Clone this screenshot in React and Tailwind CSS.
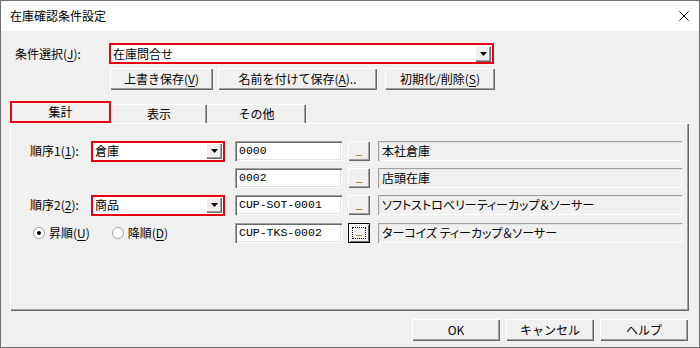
import React from "react";

const raised = "bg-[#f0f0f0] shadow-[inset_1px_1px_0_#ffffff,inset_-1px_-1px_0_#696969,inset_-2px_-2px_0_#a0a0a0]";
const sunkenWhite = "bg-white shadow-[inset_1px_1px_0_#a0a0a0,inset_2px_2px_0_#696969,inset_-1px_-1px_0_#ffffff,inset_-2px_-2px_0_#e3e3e3]";
const sunkenGray = "bg-[#f0f0f0] shadow-[inset_1px_1px_0_#a0a0a0,inset_2px_2px_0_#e3e3e3,inset_-1px_-1px_0_#ffffff]";

function U({ children }) {
  return <span className="underline underline-offset-2">{children}</span>;
}

function Btn({ className = "", children }) {
  return (
    <div className={`${raised} h-[22px] flex items-center justify-center ${className}`}>
      {children}
    </div>
  );
}

function Arrow() {
  return (
    <div className={`${raised} w-[16px] h-[16px] flex items-center justify-center mr-[1px]`}>
      <svg width="7" height="4" viewBox="0 0 7 4">
        <path d="M0 0H7L3.5 4Z" fill="#000" />
      </svg>
    </div>
  );
}

function Combo({ className = "", text }) {
  return (
    <div className={`h-[21px] border-2 border-[#e60012] bg-white flex items-center justify-between ${className}`}>
      <span className="pl-[2px] leading-none">{text}</span>
      <Arrow />
    </div>
  );
}

function Dots({ focus }) {
  if (focus) {
    return (
      <div className="w-[22px] h-[20px] bg-[#f0f0f0] border border-black shadow-[inset_1px_1px_0_#ffffff,inset_-1px_-1px_0_#696969] flex items-center justify-center">
        <div className="w-[14px] h-[12px] border border-dotted border-black flex items-end justify-center pb-[1px]">
          <span className="text-[8px] leading-none">...</span>
        </div>
      </div>
    );
  }
  return (
    <div className={`${raised} w-[22px] h-[20px] flex items-end justify-center pb-[4px]`}>
      <span className="text-[8px] leading-none">...</span>
    </div>
  );
}

function Radio({ checked }) {
  return (
    <svg width="12" height="12" viewBox="0 0 12 12">
      <circle cx="6" cy="6" r="5.5" fill="#fff" stroke="#a0a0a0" />
      {checked && <circle cx="6" cy="6" r="2" fill="#000" />}
    </svg>
  );
}

function DataRow({ left, code, name, focus }) {
  return (
    <div className="flex items-center h-[20px]">
      <div className="w-[205px] flex items-center h-full">{left}</div>
      <div className={`${sunkenWhite} w-[107px] h-[20px] flex items-center pl-[4px]`}>
        <span className="font-['Liberation_Mono',monospace] text-[11.5px] leading-none">{code}</span>
      </div>
      <div className="ml-[6px]">
        <Dots focus={focus} />
      </div>
      <div className={`${sunkenGray} ml-[8px] w-[304px] h-[20px] flex items-center pl-[4px]`}>
        <span className="[font-feature-settings:'palt'] leading-none">{name}</span>
      </div>
    </div>
  );
}

export default function App() {
  return (
    <div className="w-[700px] h-[348px] border border-[#707070] bg-[#f0f0f0] flex flex-col overflow-hidden font-['Noto_Sans_CJK_JP',sans-serif] text-[12px] text-black">
      {/* title bar */}
      <div className="h-[30px] bg-white flex items-center justify-between pl-[9px] pr-[10px] shrink-0">
        <span className="leading-none">在庫確認条件設定</span>
        <svg width="10" height="10" viewBox="0 0 10 10">
          <path d="M0.5 0.5L9.5 9.5M9.5 0.5L0.5 9.5" stroke="#000" strokeWidth="1" />
        </svg>
      </div>

      {/* condition select */}
      <div className="mt-[12px] flex items-center pl-[14px] h-[21px]">
        <span className="w-[94px] leading-none">
          条件選択(<U>J</U>):
        </span>
        <Combo className="w-[385px]" text="在庫問合せ" />
      </div>

      {/* buttons */}
      <div className="mt-[4px] flex pl-[109px]">
        <Btn className="w-[103px]">
          上書き保存(<U>V</U>)
        </Btn>
        <Btn className="ml-[5px] w-[159px]">
          名前を付けて保存(<U>A</U>)..
        </Btn>
        <Btn className="ml-[8px] w-[110px]">
          初期化/削除(<U>S</U>)
        </Btn>
      </div>

      {/* tabs */}
      <div className="mt-[11px] flex items-end pl-[9px] h-[22px]">
        <div className="w-[101px] h-[22px] border-2 border-[#e60012] flex items-center justify-center">
          <span className="leading-none">集計</span>
        </div>
        <div className="w-[96px] h-[19px] border-t border-white shadow-[inset_-1px_0_0_#696969,inset_-2px_0_0_#a0a0a0] flex items-center justify-center">
          <span className="leading-none">表示</span>
        </div>
        <div className="w-[99px] h-[19px] border-t border-white shadow-[inset_-1px_0_0_#696969,inset_-2px_0_0_#a0a0a0] flex items-center justify-center">
          <span className="leading-none">その他</span>
        </div>
      </div>

      {/* panel */}
      <div className="ml-[9px] w-[679px] h-[188px] shadow-[inset_1px_1px_0_#ffffff,inset_-1px_-1px_0_#696969,inset_-2px_-2px_0_#a0a0a0] pt-[18px] pl-[20px] flex flex-col gap-[7px]">
        <DataRow
          code="0000"
          name="本社倉庫"
          left={
            <>
              <span className="w-[61px] leading-none">
                順序1(<U>1</U>):
              </span>
              <Combo className="w-[134px]" text="倉庫" />
            </>
          }
        />
        <DataRow code="0002" name="店頭在庫" left={null} />
        <DataRow
          code="CUP-SOT-0001"
          name="ソフトストロベリーティーカップ＆ソーサー"
          left={
            <>
              <span className="w-[61px] leading-none">
                順序2(<U>2</U>):
              </span>
              <Combo className="w-[134px]" text="商品" />
            </>
          }
        />
        <div className="mt-[1px]">
          <DataRow
            code="CUP-TKS-0002"
            name="ターコイズ ティーカップ＆ソーサー"
            focus
            left={
              <div className="flex items-center pl-[3px]">
                <Radio checked />
                <span className="ml-[4px] leading-none">
                  昇順(<U>U</U>)
                </span>
                <div className="ml-[22px]">
                  <Radio />
                </div>
                <span className="ml-[4px] leading-none">
                  降順(<U>D</U>)
                </span>
              </div>
            }
          />
        </div>
      </div>

      {/* bottom buttons */}
      <div className="mt-[8px] flex justify-end pr-[11px] gap-[6px]">
        <Btn className="w-[88px]">OK</Btn>
        <Btn className="w-[88px]">キャンセル</Btn>
        <Btn className="w-[88px]">ヘルプ</Btn>
      </div>
    </div>
  );
}
